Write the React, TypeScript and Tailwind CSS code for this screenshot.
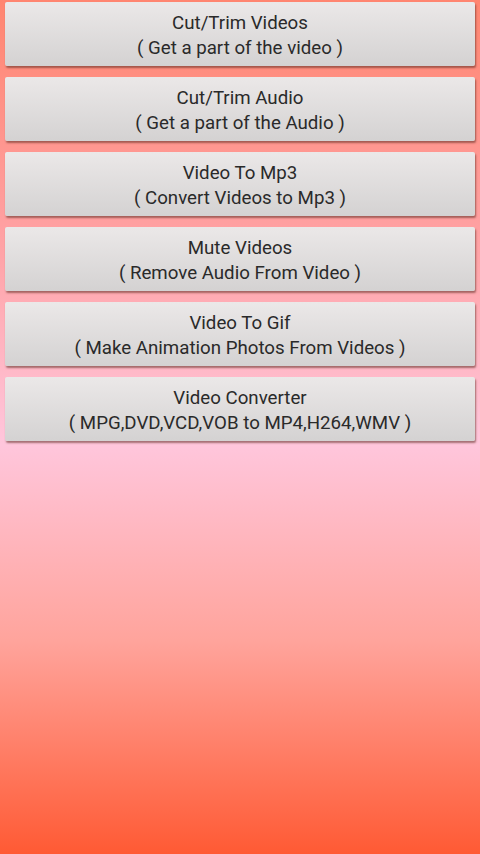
const items = [
  { title: "Cut/Trim Videos", sub: "( Get a part of the video )" },
  { title: "Cut/Trim Audio", sub: "( Get a part of the Audio )" },
  { title: "Video To Mp3", sub: "( Convert Videos to Mp3 )" },
  { title: "Mute Videos", sub: "( Remove Audio From Video )" },
  { title: "Video To Gif", sub: "( Make Animation Photos From Videos )" },
  { title: "Video Converter", sub: "( MPG,DVD,VCD,VOB to MP4,H264,WMV )" },
]

export default function App() {
  return (
    <div className="h-[854px] w-[480px] overflow-hidden bg-[linear-gradient(to_bottom,#ff8570_0%,#ffa4a8_30%,#ffc6dc_52%,#ffa49c_75%,#ff5a34_100%)] font-['Roboto',sans-serif]">
      <div className="flex flex-col gap-[11px] px-[5px] pt-[2px]">
        {items.map((item) => (
          <button
            key={item.title}
            className="flex h-[64px] w-full flex-col items-center justify-center rounded-[2px] bg-[linear-gradient(to_bottom,#ebe8e8,#d4d2d2)] pt-[3px] text-[18.7px] leading-[25px] text-[#2a2a2a] shadow-[1px_2px_2px_rgba(90,40,30,0.55)]"
          >
            <span>{item.title}</span>
            <span>{item.sub}</span>
          </button>
        ))}
      </div>
    </div>
  )
}
